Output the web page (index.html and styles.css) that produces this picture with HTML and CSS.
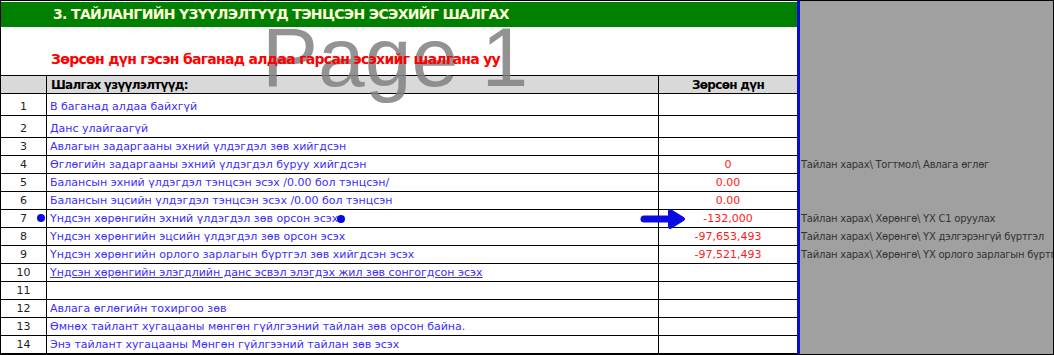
FILE: index.html
```html
<!DOCTYPE html>
<html lang="mn">
<head>
<meta charset="utf-8">
<title>Шалгах үзүүлэлтүүд</title>
<link rel="stylesheet" href="styles.css">
</head>
<body>
<div class="sheet">
  <div class="row r-title">
    <div class="span3 title">3. ТАЙЛАНГИЙН ҮЗҮҮЛЭЛТҮҮД ТЭНЦСЭН ЭСЭХИЙГ ШАЛГАХ</div>
    <div class="blue"></div>
    <div class="notes"></div>
  </div>
  <div class="row r-sub">
    <div class="span3 subtitle"><span class="sub-text">Зөрсөн дүн гэсэн баганад алдаа гарсан эсэхийг шалгана уу</span></div>
    <div class="blue"></div>
    <div class="notes"></div>
  </div>
  <div class="row r-head">
    <div class="cell num"></div>
    <div class="cell desc head">Шалгах үзүүлэлтүүд:</div>
    <div class="cell val head">Зөрсөн дүн</div>
    <div class="blue"></div>
    <div class="notes"></div>
  </div>
  <div class="row r-tall">
    <div class="cell num">1</div>
    <div class="cell desc">В баганад алдаа байхгүй</div>
    <div class="cell val"></div>
    <div class="blue"></div>
    <div class="notes"></div>
  </div>
  <div class="row r-tall">
    <div class="cell num">2</div>
    <div class="cell desc">Данс улайгаагүй</div>
    <div class="cell val"></div>
    <div class="blue"></div>
    <div class="notes"></div>
  </div>
  <div class="row">
    <div class="cell num">3</div>
    <div class="cell desc">Авлагын задаргааны эхний үлдэгдэл зөв хийгдсэн</div>
    <div class="cell val"></div>
    <div class="blue"></div>
    <div class="notes"></div>
  </div>
  <div class="row">
    <div class="cell num">4</div>
    <div class="cell desc">Өглөгийн задаргааны эхний үлдэгдэл буруу хийгдсэн</div>
    <div class="cell val">0</div>
    <div class="blue"></div>
    <div class="notes">Тайлан харах\ Тогтмол\ Авлага өглөг</div>
  </div>
  <div class="row">
    <div class="cell num">5</div>
    <div class="cell desc">Балансын эхний үлдэгдэл тэнцсэн эсэх /0.00 бол тэнцсэн/</div>
    <div class="cell val">0.00</div>
    <div class="blue"></div>
    <div class="notes"></div>
  </div>
  <div class="row">
    <div class="cell num">6</div>
    <div class="cell desc">Балансын эцсийн үлдэгдэл тэнцсэн эсэх /0.00 бол тэнцсэн</div>
    <div class="cell val">0.00</div>
    <div class="blue"></div>
    <div class="notes"></div>
  </div>
  <div class="row">
    <div class="cell num">7</div>
    <div class="cell desc">Үндсэн хөрөнгийн эхний үлдэгдэл зөв орсон эсэх</div>
    <div class="cell val">-132,000</div>
    <div class="blue"></div>
    <div class="notes">Тайлан харах\ Хөрөнгө\ ҮХ С1 оруулах</div>
  </div>
  <div class="row">
    <div class="cell num">8</div>
    <div class="cell desc">Үндсэн хөрөнгийн эцсийн үлдэгдэл зөв орсон эсэх</div>
    <div class="cell val">-97,653,493</div>
    <div class="blue"></div>
    <div class="notes">Тайлан харах\ Хөрөнгө\ ҮХ дэлгэрэнгүй бүртгэл</div>
  </div>
  <div class="row">
    <div class="cell num">9</div>
    <div class="cell desc">Үндсэн хөрөнгийн орлого зарлагын бүртгэл зөв хийгдсэн эсэх</div>
    <div class="cell val">-97,521,493</div>
    <div class="blue"></div>
    <div class="notes">Тайлан харах\ Хөрөнгө\ ҮХ орлого зарлагын бүртгэл</div>
  </div>
  <div class="row">
    <div class="cell num">10</div>
    <div class="cell desc link">Үндсэн хөрөнгийн элэгдлийн данс эсвэл элэгдэх жил зөв сонгогдсон эсэх</div>
    <div class="cell val"></div>
    <div class="blue"></div>
    <div class="notes"></div>
  </div>
  <div class="row">
    <div class="cell num">11</div>
    <div class="cell desc"></div>
    <div class="cell val"></div>
    <div class="blue"></div>
    <div class="notes"></div>
  </div>
  <div class="row">
    <div class="cell num">12</div>
    <div class="cell desc">Авлага өглөгийн тохиргоо зөв</div>
    <div class="cell val"></div>
    <div class="blue"></div>
    <div class="notes"></div>
  </div>
  <div class="row">
    <div class="cell num">13</div>
    <div class="cell desc">Өмнөх тайлант хугацааны мөнгөн гүйлгээний тайлан зөв орсон байна.</div>
    <div class="cell val"></div>
    <div class="blue"></div>
    <div class="notes"></div>
  </div>
  <div class="row">
    <div class="cell num">14</div>
    <div class="cell desc">Энэ тайлант хугацааны Мөнгөн гүйлгээний тайлан зөв эсэх</div>
    <div class="cell val"></div>
    <div class="blue"></div>
    <div class="notes"></div>
  </div>

  <div class="watermark">Page 1</div>
  <svg class="marks" width="1054" height="355" viewBox="0 0 1054 355">
    <circle cx="41" cy="218" r="4" fill="#0a0ae6"/>
    <circle cx="341" cy="219" r="4" fill="#0a0ae6"/>
    <line x1="644" y1="219" x2="672" y2="219" stroke="#0a0ae6" stroke-width="7" stroke-linecap="round"/>
    <polygon points="670,211 683,219 670,227" fill="#0a0ae6" stroke="#0a0ae6" stroke-width="4" stroke-linejoin="round"/>
  </svg>
</div>
</body>
</html>
```

FILE: styles.css
```css
html, body {
  margin: 0;
  padding: 0;
  background: #ffffff;
}

.sheet {
  position: relative;
  width: 1054px;
  height: 355px;
  box-sizing: border-box;
  border: 1px solid #000;
  background: #fff;
  font-family: "DejaVu Sans", "Liberation Sans", sans-serif;
  font-size: 11px;
  overflow: hidden;
}

.row {
  display: grid;
  grid-template-columns: 46px 612px 138px 3px 253px;
  height: 18px;
}

.r-title { height: 26px; }
.r-sub { height: 49px; }
.r-tall { height: 22px; }

.span3 {
  grid-column: 1 / 4;
  box-sizing: border-box;
}

.title {
  background: #008000;
  border-top: 1px solid #fff;
  color: #ffffd8;
  font-weight: bold;
  font-size: 14px;
  letter-spacing: -0.65px;
  line-height: 24px;
  padding-left: 52px;
  white-space: nowrap;
}

.subtitle {
  border-bottom: 1px solid #000;
  color: #ff0000;
  font-weight: bold;
  font-size: 14px;
  letter-spacing: -0.7px;
  padding-left: 50px;
  padding-top: 23px;
  line-height: 18px;
  white-space: nowrap;
}

.sub-text {
  position: relative;
  z-index: 2;
}

.blue {
  background: #0b0bcf;
}

.notes {
  background: #a0a0a0;
  color: #333;
  font-size: 10px;
  letter-spacing: -0.25px;
  white-space: nowrap;
  overflow: hidden;
  display: flex;
  align-items: flex-end;
  line-height: 16px;
  padding-left: 1px;
  padding-bottom: 1px;
}

.cell {
  box-sizing: border-box;
  border-bottom: 1px solid #000;
  display: flex;
  align-items: flex-end;
  line-height: 16px;
  white-space: nowrap;
  overflow: hidden;
}

.num {
  border-right: 1px solid #000;
  justify-content: center;
  color: #222;
}

.desc {
  border-right: 1px solid #000;
  padding-left: 3px;
  color: #3b2dff;
}

.val {
  justify-content: center;
  color: #ff1a1a;
}

.r-head .cell {
  background: #d9d9d9;
}

.head {
  color: #000;
  font-weight: bold;
  font-size: 12px;
  letter-spacing: -0.7px;
}

.desc.head {
  padding-left: 4px;
}

.link {
  text-decoration: underline;
}

.watermark {
  position: absolute;
  z-index: 1;
  left: 261px;
  top: 14px;
  font-family: "Liberation Sans", Arial, sans-serif;
  font-size: 84px;
  line-height: 84px;
  color: rgba(128, 128, 128, 0.85);
  white-space: nowrap;
  pointer-events: none;
}

.marks {
  position: absolute;
  z-index: 3;
  left: -1px;
  top: -1px;
  pointer-events: none;
}
```
